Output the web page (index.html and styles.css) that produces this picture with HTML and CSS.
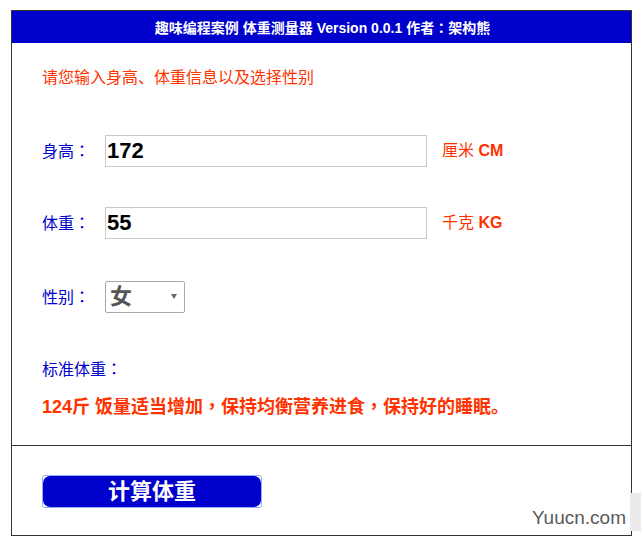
FILE: index.html
```html
<!DOCTYPE html>
<html lang="zh-CN">
<head>
<meta charset="utf-8">
<title>体重测量器</title>
<link rel="stylesheet" href="styles.css">
</head>
<body>
<div class="app">
  <div class="header">趣味编程案例 体重测量器 Version 0.0.1 作者<span class="colon">：</span>架构熊</div>
  <div class="main">
    <p class="prompt">请您输入身高、体重信息以及选择性别</p>
    <div class="row row-first">
      <label class="label">身高<span class="colon">：</span></label>
      <input class="field" type="text" value="172">
      <span class="unit">厘米 <b>CM</b></span>
    </div>
    <div class="row row-second">
      <label class="label">体重<span class="colon">：</span></label>
      <input class="field" type="text" value="55">
      <span class="unit">千克 <b>KG</b></span>
    </div>
    <div class="row row-third">
      <label class="label">性别<span class="colon">：</span></label>
      <div class="select"><span class="select-value">女</span><span class="caret"></span></div>
    </div>
    <p class="std-label">标准体重<span class="colon">：</span></p>
    <p class="result">124斤 饭量适当增加<span class="comma">，</span>保持均衡营养进食<span class="comma">，</span>保持好的睡眠。</p>
  </div>
  <div class="footer">
    <button class="calc" type="button"><span class="calc-inner">计算体重</span></button>
  </div>
</div>
<div class="wm-strip"></div>
<div class="watermark">Yuucn.com</div>
</body>
</html>
```

FILE: styles.css
```css
html, body {
  margin: 0;
  padding: 0;
  background: #ffffff;
}
body {
  font-family: "Liberation Sans", "Noto Sans CJK SC", sans-serif;
  color: #000;
}
.app {
  margin: 10px 9px 0 11px;
  border: 1px solid #333333;
  height: 526px;
  box-sizing: border-box;
  display: flex;
  flex-direction: column;
}
.header {
  height: 32px;
  line-height: 32px;
  background: #0000cc;
  color: #ffffff;
  font-size: 14px;
  font-weight: bold;
  text-align: center;
  padding-left: 2px;
}
.colon {
  font-family: "Noto Sans CJK JP", sans-serif;
  font-feature-settings: "locl" 0;
}
.comma {
  font-family: "Noto Sans CJK TC", sans-serif;
  font-feature-settings: "locl" 0;
}
.main {
  height: 402px;
  box-sizing: border-box;
  padding: 23px 0 0 30px;
  display: flex;
  flex-direction: column;
}
.prompt {
  margin: 0;
  font-size: 16px;
  line-height: 24px;
  color: #ff3300;
}
.row {
  display: flex;
  align-items: center;
  height: 32px;
}
.row-first { margin-top: 45px; }
.row-second { margin-top: 40px; }
.row-third { margin-top: 42px; }
.label {
  width: 63px;
  flex: none;
  font-size: 16px;
  color: #0000cc;
  line-height: 20px;
}
.field {
  width: 322px;
  height: 32px;
  box-sizing: border-box;
  border: 1px solid #c8c8c8;
  margin: 0;
  padding: 0 0 0 1px;
  font-family: "Liberation Sans", sans-serif;
  font-size: 22px;
  font-weight: bold;
  color: #000;
  outline: none;
}
.unit {
  margin-left: 15px;
  font-size: 16px;
  color: #ff3300;
  line-height: 20px;
}
.unit b {
  font-weight: bold;
}
.select {
  width: 80px;
  height: 32px;
  box-sizing: border-box;
  border: 1px solid #a9a9a9;
  border-radius: 2px;
  display: flex;
  align-items: center;
  justify-content: space-between;
  padding: 0 7px 0 4px;
}
.select-value {
  font-size: 22px;
  font-weight: bold;
  color: #555555;
  line-height: 28px;
}
.caret {
  width: 0;
  height: 0;
  border-left: 3px solid transparent;
  border-right: 3px solid transparent;
  border-top: 5px solid #666666;
  margin-top: -2px;
}
.std-label {
  margin: 43px 0 0 0;
  font-size: 16px;
  line-height: 24px;
  color: #0000cc;
}
.result {
  margin: 10px 0 0 0;
  font-size: 18px;
  line-height: 26px;
  font-weight: bold;
  color: #ff3300;
}
.footer {
  flex: 1;
  border-top: 1px solid #333333;
  padding: 29px 0 0 30px;
}
.calc {
  display: block;
  width: 220px;
  height: 33px;
  box-sizing: border-box;
  margin: 0;
  padding: 0;
  border: 1px solid #8db4f2;
  border-radius: 3px;
  background: #ffffff;
  cursor: pointer;
}
.calc-inner {
  display: flex;
  align-items: center;
  justify-content: center;
  height: 100%;
  background: #0000cc;
  border-radius: 7px;
  color: #ffffff;
  font-family: "Liberation Sans", "Noto Sans CJK SC", sans-serif;
  font-size: 22px;
  font-weight: bold;
  line-height: 31px;
}
.wm-strip {
  position: absolute;
  left: 630px;
  top: 493px;
  width: 11px;
  height: 38px;
  background: #ebebeb;
}
.watermark {
  position: absolute;
  left: 532px;
  top: 506px;
  font-family: "Liberation Sans", sans-serif;
  font-size: 19px;
  line-height: 24px;
  color: #5a5a5a;
}
```
